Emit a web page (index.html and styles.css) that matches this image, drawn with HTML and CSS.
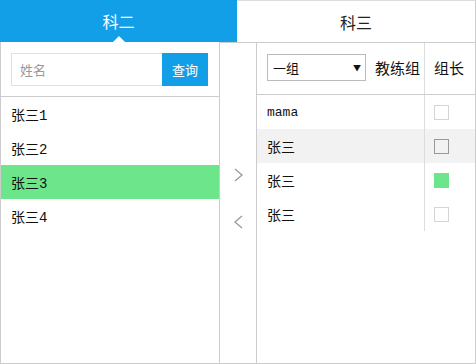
FILE: index.html
```html
<!DOCTYPE html>
<html lang="zh">
<head>
<meta charset="utf-8">
<title>科二 科三</title>
<link rel="stylesheet" href="styles.css">
</head>
<body>
<div class="wrap">
  <div class="tabs">
    <div class="tab tab-active">科二<span class="caret"></span></div>
    <div class="tab">科三</div>
  </div>
  <div class="body">
    <div class="left">
      <div class="search">
        <div class="input">姓名</div>
        <div class="btn">查询</div>
      </div>
      <div class="list">
        <div class="item">张三1</div>
        <div class="item">张三2</div>
        <div class="item item-sel">张三3</div>
        <div class="item">张三4</div>
      </div>
    </div>
    <div class="mid">
      <svg class="arrow" width="9" height="14" viewBox="0 0 9 14"><path d="M1 1 L8 7 L1 13" fill="none" stroke="#9a9a9a" stroke-width="1.3"/></svg>
      <svg class="arrow" width="9" height="14" viewBox="0 0 9 14"><path d="M8 1 L1 7 L8 13" fill="none" stroke="#9a9a9a" stroke-width="1.3"/></svg>
    </div>
    <div class="right">
      <div class="row head">
        <div class="c1">
          <div class="select"><span>一组</span><span class="tri">▼</span></div>
          <span class="hlabel">教练组</span>
        </div>
        <div class="c2"><span class="hlabel">组长</span></div>
      </div>
      <div class="row">
        <div class="c1 name latin">mama</div>
        <div class="c2"><span class="cb"></span></div>
      </div>
      <div class="row row-hover">
        <div class="c1 name">张三</div>
        <div class="c2"><span class="cb cb-dark"></span></div>
      </div>
      <div class="row">
        <div class="c1 name">张三</div>
        <div class="c2"><span class="cb cb-on"></span></div>
      </div>
      <div class="row">
        <div class="c1 name">张三</div>
        <div class="c2"><span class="cb"></span></div>
      </div>
    </div>
  </div>
</div>
</body>
</html>
```
FILE: styles.css
```css
html, body {
  margin: 0;
  padding: 0;
  background: #fff;
}
body {
  font-family: "Noto Sans CJK SC", sans-serif;
  color: #222;
}
.wrap {
  width: 476px;
  height: 364px;
  display: flex;
  flex-direction: column;
}
.tabs {
  display: flex;
  height: 42px;
  flex: none;
}
.tab {
  position: relative;
  flex: none;
  width: 239px;
  box-sizing: border-box;
  border-top: 1px solid #ddd;
  border-right: 1px solid #ccc;
  display: flex;
  align-items: center;
  justify-content: center;
  font-size: 16px;
  color: #222;
}
.tab-active {
  width: 237px;
  background: #129fe8;
  color: #fff;
  border: none;
}
.caret {
  position: absolute;
  left: 113px;
  bottom: 0;
  width: 0;
  height: 0;
  border-left: 6px solid transparent;
  border-right: 6px solid transparent;
  border-bottom: 6px solid #fff;
}
.body {
  flex: 1;
  display: flex;
}
.left {
  width: 220px;
  box-sizing: border-box;
  border-left: 1px solid #ccc;
  border-right: 1px solid #ccc;
  border-bottom: 1px solid #ccc;
}
.search {
  height: 55px;
  box-sizing: border-box;
  padding: 11px 0 0 10px;
  border-bottom: 1px solid #ccc;
  display: flex;
}
.input {
  width: 151px;
  height: 33px;
  box-sizing: border-box;
  border: 1px solid #e0e0e0;
  border-right: none;
  padding-left: 8px;
  font-size: 13px;
  color: #999;
  display: flex;
  align-items: center;
}
.btn {
  width: 46px;
  height: 33px;
  background: #129fe8;
  color: #fff;
  font-size: 13px;
  display: flex;
  align-items: center;
  justify-content: center;
}
.item {
  height: 34px;
  padding-left: 10px;
  display: flex;
  align-items: center;
  font-family: "Liberation Mono", "Noto Sans CJK SC", monospace;
  font-size: 14px;
  color: #111;
}
.item-sel {
  background: #6de68b;
}
.mid {
  width: 36px;
  box-sizing: border-box;
  border-top: 1px solid #ccc;
  border-bottom: 1px solid #ccc;
  display: flex;
  flex-direction: column;
  align-items: center;
  padding-top: 125px;
  gap: 33px;
}
.arrow {
  display: block;
}
.right {
  width: 220px;
  box-sizing: border-box;
  border: 1px solid #ccc;
}
.row {
  display: flex;
  height: 34px;
}
.head {
  height: 51px;
  border-bottom: 1px solid #ccc;
}
.c1 {
  width: 168px;
  box-sizing: border-box;
  padding-left: 10px;
  display: flex;
  align-items: center;
  border-right: 1px solid #ddd;
}
.c2 {
  flex: 1;
  padding-left: 9px;
  display: flex;
  align-items: center;
}
.select {
  width: 99px;
  height: 27px;
  box-sizing: border-box;
  border: 1px solid #bbb;
  padding: 0 4px 0 5px;
  display: flex;
  align-items: center;
  justify-content: space-between;
  font-size: 13px;
  color: #111;
  margin-right: 9px;
  margin-bottom: 3px;
}
.tri {
  font-size: 8px;
  color: #111;
}
.hlabel {
  font-size: 15px;
  color: #111;
  margin-bottom: 2px;
}
.name {
  font-size: 14px;
  color: #111;
}
.latin {
  font-family: "Liberation Mono", monospace;
  font-size: 13px;
}
.row-hover {
  background: #f2f2f2;
}
.cb {
  display: block;
  width: 15px;
  height: 15px;
  box-sizing: border-box;
  border: 1px solid #d4d4d4;
  background: #fff;
}
.cb-dark {
  border-color: #999;
  background: transparent;
}
.cb-on {
  border: none;
  background: #6de68b;
}
```
